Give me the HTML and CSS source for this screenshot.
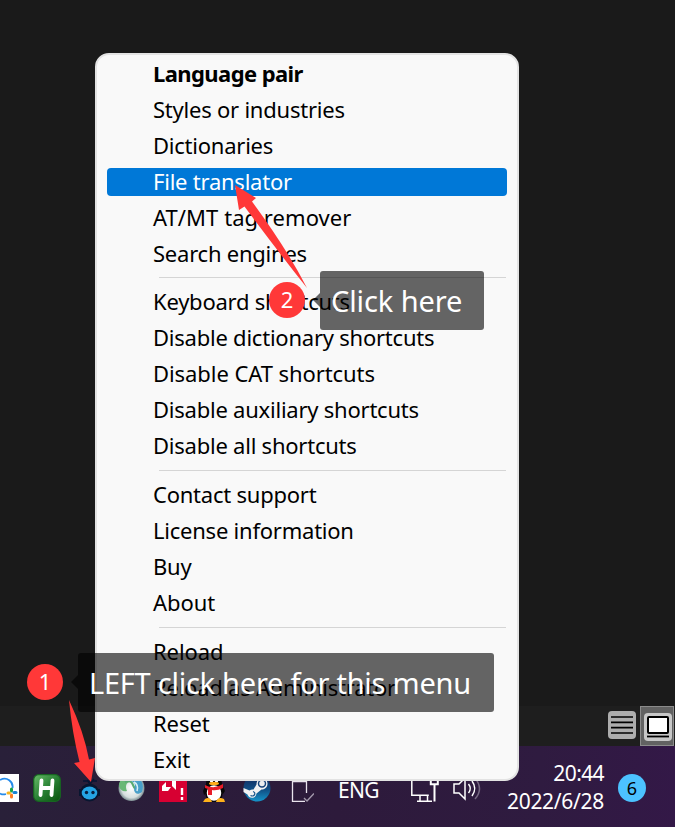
FILE: index.html
```html
<!DOCTYPE html>
<html lang="en">
<head>
<meta charset="utf-8">
<title>Tray menu</title>
<link rel="stylesheet" href="styles.css">
</head>
<body>
<div class="screen">
  <div class="workspace"></div>
  <div class="statusbar">
    <span class="view"><svg width="28" height="28" viewBox="0 0 28 28"><rect width="28" height="28" rx="4" fill="#adadad"/><path d="M3 6h22M3 11.300h22M3 16.600h22M3 22h22" stroke="#000" stroke-width="1.700"/></svg></span>
    <span class="view active"><svg width="28" height="28" viewBox="0 0 28 28"><rect width="28" height="28" rx="4" fill="#c8c8c8"/><rect x="4" y="4" width="20" height="16" rx="1" fill="#fff" stroke="#000" stroke-width="2"/><path d="M3 23.500h22" stroke="#000" stroke-width="1.800"/></svg></span>
  </div>
  <div class="taskbar">
    <svg class="tray" width="19" height="28" viewBox="0 0 19 28"><path d="M0 0h19v28H0z" fill="#fff"/><path d="M0 6C7 2 13.500 8 12.500 14M0 19.500c2 1.200 4 1.200 6 .5" fill="none" stroke="#258bea" stroke-width="1.800"/><g stroke-width="3" stroke-linecap="round"><path d="M11.500 15v2" stroke="#16a34a"/><path d="M14 18.500h2" stroke="#1781d5"/><path d="M11.500 21v2" stroke="#ff7a20"/><path d="M8 19h1.500" stroke="#f4b51f"/></g></svg>
    <svg class="tray h-icon" width="28" height="28" viewBox="0 0 28 28"><defs><linearGradient id="green" x1="0" y1="0" x2="1" y2="1"><stop stop-color="#68bd68"/><stop offset=".5" stop-color="#298135"/><stop offset="1" stop-color="#07530b"/></linearGradient></defs><rect x=".7" y=".7" width="26.600" height="26.600" rx="5" fill="url(#green)" stroke="#176621" stroke-width="1.200"/><path d="M8.500 6.500L7.500 21M19.500 6.500L18.500 21M8 14h11" stroke="#fff" stroke-width="3.800" stroke-linecap="round"/></svg>
    <svg class="tray bot" width="22" height="28" viewBox="0 0 22 28"><path d="M4 7h14M8 6l3 4 4-5" fill="none" stroke="#071534" stroke-width="1.500"/><ellipse cx="10.500" cy="18.500" rx="9.500" ry="9" fill="#081630"/><path d="M0 15h2v7H0zM19 15h2v7h-2z" fill="#081630"/><ellipse cx="10.500" cy="19" rx="7.800" ry="6.500" fill="#25a5e5"/><circle cx="7.500" cy="18.500" r="1.700" fill="#082040"/><circle cx="14" cy="18.500" r="1.700" fill="#082040"/></svg>
    <svg class="tray globe" width="27" height="28" viewBox="0 0 27 28"><defs><radialGradient id="silver"><stop stop-color="#fff"/><stop offset=".75" stop-color="#d5dede"/><stop offset="1" stop-color="#7b8c91"/></radialGradient></defs><circle cx="13.500" cy="14" r="13" fill="url(#silver)"/><path d="M1 12C1 5 7 1 13 2v6c-5 0-6 4-4 9-4 1-7-1-8-5z" fill="#69b876"/><path d="M7 8q6-3 8 3t8 6" fill="none" stroke="#58aa73" stroke-width="2.200"/><path d="M13 3C23 2 27 10 24 18c-4 3-7 2-8-2 2-5 1-8-3-9z" fill="#499fc9"/><path d="M16 8q5 3 3 9" fill="none" stroke="#d9eef5" stroke-width="1.500"/></svg>
    <svg class="tray red" width="28" height="28" viewBox="0 0 28 28"><path d="M0 0h28v28H0z" fill="#d70032"/><path d="M7 2h10v14l-4-4V7H9zM3 12l4-4v5h5l-3 4H3z" fill="#fff"/><path d="M23 14v7M23 23v3" stroke="#fff" stroke-width="2.400"/></svg>
    <svg class="tray penguin" width="24" height="28" viewBox="0 0 24 28"><path d="M4 10C4-2 20-2 20 10l3 7-2 3-3-2-12 0-4 3-1-4z" fill="#080808"/><ellipse cx="12" cy="19" rx="8" ry="8.500" fill="#fff" stroke="#080808" stroke-width="1.500"/><ellipse cx="9.500" cy="6" rx="1.800" ry="2.500" fill="#fff"/><ellipse cx="14.500" cy="6" rx="1.800" ry="2.500" fill="#fff"/><ellipse cx="12" cy="9.500" rx="5" ry="1.700" fill="#ffad19"/><path d="M3 11q9 5 18-1v4q-6 3-11 2v5H6v-6l-3-1z" fill="#e71c28"/><path d="M3 25q5-3 7 3H1zM14 28q2-6 8-3l1 3z" fill="#ffb21a"/></svg>
    <svg class="tray steam" width="28" height="28" viewBox="0 0 28 28"><defs><linearGradient id="ocean" x1="0" y1="0" x2="0" y2="1"><stop stop-color="#122458"/><stop offset=".6" stop-color="#11548a"/><stop offset="1" stop-color="#1594ca"/></linearGradient></defs><circle cx="14" cy="14" r="13.500" fill="url(#ocean)"/><path d="M.5 14l6 2.500q2-1.500 4-1l3-5c0-8 11-8 11-1 0 4-3 6-6 6l-5 4c-1 6-8 5-9 1L.5 18z" fill="#f2f2f2"/><circle cx="19" cy="9.500" r="3.500" fill="#eee" stroke="#17447a" stroke-width="1.500"/><path d="M7.500 21.500c4 2 6-3 2.500-4" fill="none" stroke="#17558b" stroke-width="1.200"/></svg>
    <svg class="tray device" width="23" height="28" viewBox="0 0 23 28"><path d="M15.500 19V7.500h-14v20H14" fill="none" stroke="#e9e4ed" stroke-width="1.300"/><path d="M13 24l3 3 7-7.500" fill="none" stroke="#a399ac" stroke-width="1.400"/></svg>
    <span class="lang">ENG</span>
    <svg class="tray network" width="28" height="28" viewBox="0 0 28 28"><path d="M.8 3v18.200h17M6 27.200h15M9 21v6M16.500 21v6" fill="none" stroke="#fff" stroke-width="1.500"/><path d="M19.800 5v5.200h7V5M23.500 10v17.500" fill="none" stroke="#fff" stroke-width="2"/></svg>
    <svg class="tray sound" width="28" height="28" viewBox="0 0 28 28"><path d="M1 10h5l6-6v21l-6-6H1z" fill="none" stroke="#fff" stroke-width="1.500"/><path d="M15.500 10q3.500 4.500 0 9M19 7q5.500 7.500 0 15" fill="none" stroke="#fff" stroke-width="1.500"/><path d="M22 4q9 11 0 21" fill="none" stroke="#756681" stroke-width="1.500"/></svg>
    <div class="clock"><div class="time">20:44</div><div class="date">2022/6/28</div></div>
    <div class="badge">6</div>
  </div>

  <nav class="menu">
    <div class="item bold">Language pair</div>
    <div class="item">Styles or industries</div>
    <div class="item">Dictionaries</div>
    <div class="item selected">File translator</div>
    <div class="item caps">AT/MT tag remover</div>
    <div class="item">Search engines</div>
    <div class="rule first"></div>
    <div class="item">Keyboard shortcuts</div>
    <div class="item">Disable dictionary shortcuts</div>
    <div class="item mixed">Disable CAT shortcuts</div>
    <div class="item">Disable auxiliary shortcuts</div>
    <div class="item">Disable all shortcuts</div>
    <div class="rule"></div>
    <div class="item">Contact support</div>
    <div class="item">License information</div>
    <div class="item">Buy</div>
    <div class="item mixed">About</div>
    <div class="rule"></div>
    <div class="item mixed">Reload</div>
    <div class="item">Reload as Administrator</div>
    <div class="item mixed">Reset</div>
    <div class="item mixed">Exit</div>
  </nav>

  <div class="callout here">Click here</div>
  <div class="callout left">LEFT click here for this menu</div>
  <svg class="arrows" width="675" height="827" viewBox="0 0 675 827" fill="#ff3838"><path d="M235 185l21 13-4 3.500Q287 249 307 288 276 249 244.500 206.500L239 210z"/><path d="M69 700Q84 732 89 759.500l6-1.500-4 24-17-19 5.500-1Q72 732 69 700z"/></svg>
  <div class="step two">2</div>
  <div class="step one">1</div>
</div>
</body>
</html>
```
FILE: styles.css
```css
* { box-sizing: border-box; }
body { margin: 0; font-family: "Noto Sans", "Open Sans", sans-serif; }
.screen { position: relative; width: 675px; height: 827px; overflow: hidden; display: flex; flex-direction: column; background: #1a1a1a; }
.workspace { flex: 1; }
.statusbar { height: 40px; background: #1e1e1e; display: flex; justify-content: flex-end; padding-right: 1px; }
.view { width: 34px; height: 40px; padding: 5px 0 0 2px; }
.view.active { background: #626262; border: 1px solid #8b8b8b; padding: 6px 0 0 3px; }
.view svg { display: block; }
.taskbar { height: 81px; display: flex; align-items: flex-start; padding-top: 28px; background: linear-gradient(90deg, #292039, #2d1a3b 50%, #2f1b40 80%, #331847); color: #fff; }
.tray { display: block; flex: none; }
.h-icon { margin-left: 14px; }
.bot { margin-left: 18px; }
.globe { margin-left: 17px; }
.red { margin-left: 14px; }
.penguin { margin-left: 15px; }
.steam { margin-left: 17px; }
.device { margin-left: 20px; }
.lang { width: 41px; margin-left: 24px; font-size: 21px; line-height: 32px; white-space: nowrap; letter-spacing: -.7px; }
.network { margin-left: 32px; }
.sound { margin-left: 14px; }
.clock { width: 110px; margin: -15px 0 0 13px; text-align: right; font-size: 21px; line-height: 28px; }
.time { letter-spacing: -.6px; }
.date { letter-spacing: -.3px; }
.badge { width: 28px; height: 28px; margin-left: 14px; border-radius: 50%; background: #4cc2ff; color: #000; text-align: center; font-size: 18px; line-height: 29px; }
.menu { position: absolute; left: 95px; top: 53px; width: 424px; height: 728px; padding: 1px 10px; border: 2px solid #e3e3e3; border-radius: 14px; background: #f9f9f9; color: #000; }
.item { height: 36px; padding-left: 46px; border-radius: 4px; font-size: 22px; line-height: 34px; letter-spacing: -.23px; white-space: nowrap; }
.bold { font-weight: 700; letter-spacing: -.58px; }
.caps { letter-spacing: .05px; }
.mixed { letter-spacing: -.07px; }
.selected { height: 28px; line-height: 26px; margin: 4px 0; background: #0078d7; color: #fff; }
.rule { height: 13px; margin: 0 1px 0 52px; padding-top: 6px; }
.rule.first { height: 12px; padding-top: 5px; }
.rule::before { content: ""; display: block; height: 1px; background: #d5d5d5; }
.callout { position: absolute; height: 59px; border-radius: 3px; background: rgba(0, 0, 0, .6); color: #fff; font-size: 29px; line-height: 59px; padding-left: 11px; white-space: nowrap; }
.callout::before { content: ""; position: absolute; left: -7px; top: 22px; border: solid transparent; border-width: 7px 7px 7px 0; border-right-color: rgba(0, 0, 0, .6); }
.here { left: 320px; top: 271px; width: 164px; letter-spacing: -.1px; }
.left { left: 78px; top: 653px; width: 416px; letter-spacing: -.25px; }
.arrows { position: absolute; left: 0; top: 0; }
.step { position: absolute; width: 36px; height: 36px; border-radius: 50%; background: #ff3838; color: #fff; text-align: center; font-size: 22px; line-height: 34px; }
.one { left: 27px; top: 664px; }
.two { left: 269px; top: 282px; }
```
